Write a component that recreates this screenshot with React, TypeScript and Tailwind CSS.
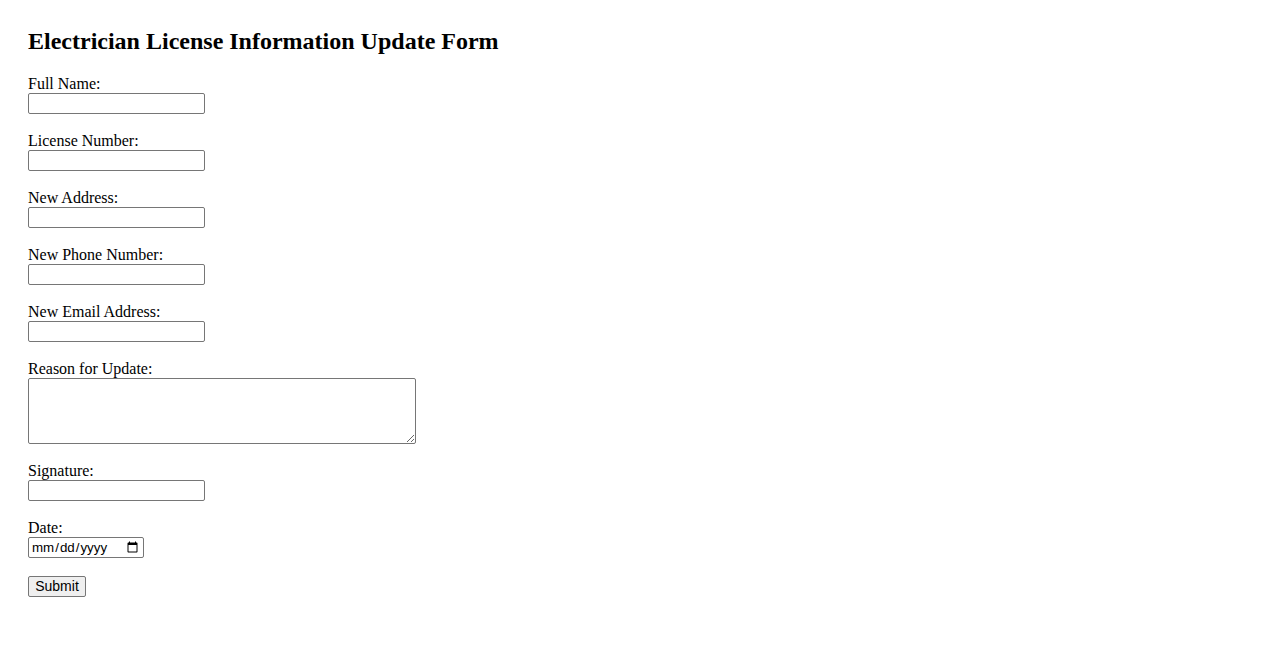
import React, { useState } from 'react';

const fields = [
    { id: 'fullName', label: 'Full Name:' },
    { id: 'licenseNumber', label: 'License Number:' },
    { id: 'newAddress', label: 'New Address:' },
    { id: 'newPhone', label: 'New Phone Number:' },
    { id: 'newEmail', label: 'New Email Address:' },
];

const inputClass =
    "block w-[177px] h-[21px] px-[2px] py-[1px] border border-[#767676] rounded-[2px] bg-white text-[13.33px] text-black font-['Liberation_Sans',Arial,sans-serif] outline-none";

const App = () => {
    const [values, setValues] = useState<Record<string, string>>({});
    const [reason, setReason] = useState('');
    const [signature, setSignature] = useState('');
    const [date, setDate] = useState('');

    return (
        <div className="min-h-screen bg-white pt-[28px] pl-[28px] text-black font-['Liberation_Serif','Times_New_Roman',serif]">
            <h2 className="text-[24px] font-bold leading-[27px] mb-[20px]">Electrician License Information Update Form</h2>
            <form className="flex flex-col" onSubmit={(e) => e.preventDefault()}>
                {fields.map((f) => (
                    <div key={f.id} className="mb-[18px]">
                        <label htmlFor={f.id} className="block text-[16px] leading-[18px]">{f.label}</label>
                        <input
                            id={f.id}
                            type="text"
                            value={values[f.id] || ''}
                            onChange={(e) => setValues({ ...values, [f.id]: e.target.value })}
                            className={inputClass}
                        />
                    </div>
                ))}
                <div className="mb-[18px]">
                    <label htmlFor="reason" className="block text-[16px] leading-[18px]">Reason for Update:</label>
                    <textarea
                        id="reason"
                        value={reason}
                        onChange={(e) => setReason(e.target.value)}
                        className="block w-[388px] h-[66px] px-[2px] py-[2px] border border-[#767676] rounded-[2px] bg-white text-[13.33px] font-['Liberation_Mono',monospace] outline-none resize"
                    />
                </div>
                <div className="mb-[18px]">
                    <label htmlFor="signature" className="block text-[16px] leading-[18px]">Signature:</label>
                    <input
                        id="signature"
                        type="text"
                        value={signature}
                        onChange={(e) => setSignature(e.target.value)}
                        className={inputClass}
                    />
                </div>
                <div className="mb-[18px]">
                    <label htmlFor="date" className="block text-[16px] leading-[18px]">Date:</label>
                    <input
                        id="date"
                        type="date"
                        value={date}
                        onChange={(e) => setDate(e.target.value)}
                        className="block w-[116px] h-[21px] px-[2px] py-[1px] border border-[#767676] rounded-[2px] bg-white text-[13.33px] font-['Liberation_Sans',Arial,sans-serif] outline-none"
                    />
                </div>
                <button
                    type="submit"
                    className="block w-[58px] h-[21px] border border-[#767676] rounded-[2px] bg-[#efefef] text-[14px] leading-[17px] text-black font-['Liberation_Sans',Arial,sans-serif]"
                >
                    Submit
                </button>
            </form>
        </div>
    );
};

export default App;
